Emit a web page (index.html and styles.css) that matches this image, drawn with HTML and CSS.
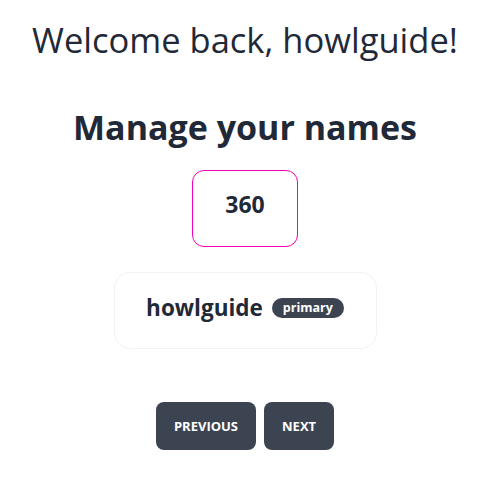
FILE: index.html
```html
<!DOCTYPE html>
<html lang="en">
<head>
<meta charset="utf-8">
<title>Manage your names</title>
<link rel="stylesheet" href="styles.css">
</head>
<body>
<main class="page">
  <h1 class="welcome">Welcome back, howlguide!</h1>
  <h2 class="title">Manage your names</h2>
  <div class="count">360</div>
  <div class="card">
    <span class="name">howlguide</span>
    <span class="badge">primary</span>
  </div>
  <div class="pager">
    <button class="btn">Previous</button>
    <button class="btn">Next</button>
  </div>
</main>
</body>
</html>
```
FILE: styles.css
```css
* { box-sizing: border-box; }
html, body { margin: 0; padding: 0; background: #ffffff; }
body {
  font-family: "Open Sans", "Noto Sans", sans-serif;
  color: #1f2937;
}
.page {
  display: flex;
  flex-direction: column;
  align-items: center;
}
.welcome {
  margin: 18px 0 0;
  font-size: 34.5px;
  line-height: 44px;
  font-weight: 400;
  color: #1f2937;
}
.title {
  margin: 41px 0 0;
  font-size: 34px;
  line-height: 48px;
  font-weight: 700;
  color: #1f2937;
}
.count {
  margin-top: 19px;
  width: 106px;
  height: 77px;
  border: 1px solid #f000b8;
  border-radius: 12px;
  text-align: center;
  padding-top: 17px;
  font-size: 23px;
  line-height: 32px;
  font-weight: 700;
}
.card {
  margin-top: 25px;
  width: 263px;
  height: 77px;
  padding-bottom: 6px;
  border: 1px solid #f2f2f3;
  border-radius: 16px;
  display: flex;
  align-items: center;
  justify-content: center;
  gap: 9px;
}
.name {
  font-size: 22.5px;
  font-weight: 700;
  color: #1f2937;
}
.badge {
  display: inline-flex;
  align-items: center;
  height: 20px;
  padding: 0 11px;
  border-radius: 10px;
  background: #3d4451;
  color: #ffffff;
  font-size: 12.5px;
  font-weight: 700;
}
.pager {
  margin-top: 53px;
  display: flex;
  gap: 8px;
}
.btn {
  height: 48px;
  padding: 0 18px;
  border: none;
  border-radius: 8px;
  background: #3d4451;
  color: #ffffff;
  font-family: inherit;
  font-size: 13px;
  font-weight: 700;
  text-transform: uppercase;
}
```
